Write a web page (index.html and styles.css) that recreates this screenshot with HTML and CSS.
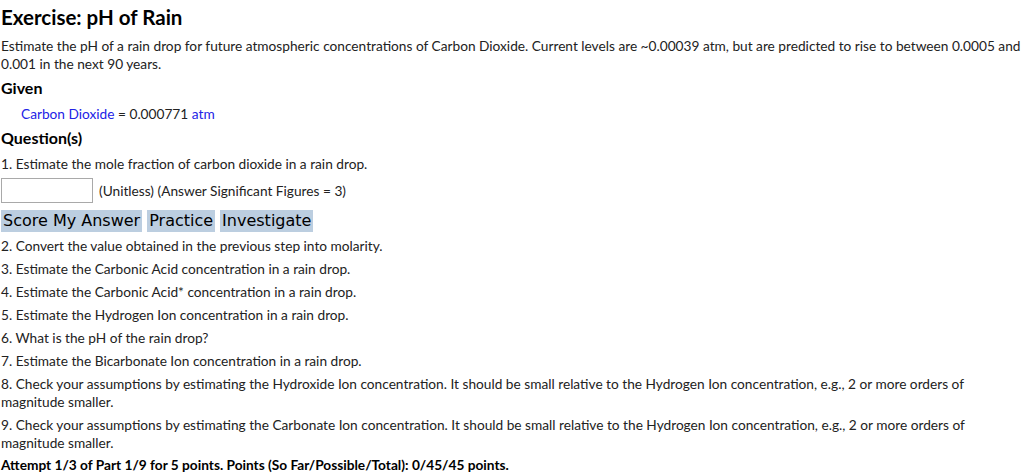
FILE: index.html
```html
<!DOCTYPE html>
<html>
<head>
<meta charset="utf-8">
<link rel="stylesheet" href="styles.css">
</head>
<body>
<div class="page">
  <h2 class="title">Exercise: pH of Rain</h2>
  <p class="intro">Estimate the pH of a rain drop for future atmospheric concentrations of Carbon Dioxide. Current levels are ~0.00039 atm, but are predicted to rise to between 0.0005 and 0.001 in the next 90 years.</p>
  <h3 class="section">Given</h3>
  <div class="given"><span class="var">Carbon Dioxide</span> = 0.000771 <span class="var">atm</span></div>
  <h3 class="section">Question(s)</h3>
  <p class="item first">1. Estimate the mole fraction of carbon dioxide in a rain drop.</p>
  <div class="answer-row">
    <input class="answer" type="text">
    <span class="units">(Unitless) (Answer Significant Figures = 3)</span>
  </div>
  <div class="buttons">
    <button class="btn">Score My Answer</button>
    <button class="btn">Practice</button>
    <button class="btn">Investigate</button>
  </div>
  <p class="item">2. Convert the value obtained in the previous step into molarity.</p>
  <p class="item">3. Estimate the Carbonic Acid concentration in a rain drop.</p>
  <p class="item">4. Estimate the Carbonic Acid* concentration in a rain drop.</p>
  <p class="item">5. Estimate the Hydrogen Ion concentration in a rain drop.</p>
  <p class="item">6. What is the pH of the rain drop?</p>
  <p class="item">7. Estimate the Bicarbonate Ion concentration in a rain drop.</p>
  <p class="item">8. Check your assumptions by estimating the Hydroxide Ion concentration. It should be small relative to the Hydrogen Ion concentration, e.g., 2 or more orders of magnitude smaller.</p>
  <p class="item">9. Check your assumptions by estimating the Carbonate Ion concentration. It should be small relative to the Hydrogen Ion concentration, e.g., 2 or more orders of magnitude smaller.</p>
  <p class="attempt">Attempt 1/3 of Part 1/9 for 5 points. Points (So Far/Possible/Total): 0/45/45 points.</p>
</div>
</body>
</html>
```
FILE: styles.css
```css
html, body {
  margin: 0;
  padding: 0;
  background: #ffffff;
}
.page {
  padding: 4px 0 0 1px;
  font-family: Lato, "Open Sans", sans-serif;
  font-size: 13.7px;
  line-height: 18px;
  color: #222222;
  width: 1022px;
}
.title {
  font-size: 20.5px;
  line-height: 26px;
  font-weight: bold;
  color: #000;
  margin: 0 0 7px 0;
}
.intro {
  margin: 0 0 4px 0;
}
.section {
  font-size: 16px;
  line-height: 22px;
  font-weight: bold;
  color: #000;
  margin: 0;
}
.given {
  padding-left: 20px;
  margin: 5px 0 3px 0;
  line-height: 20px;
}
.var {
  color: #2222e6;
}
.item {
  margin: 0 0 5px 0;
}
.item.first {
  margin-top: 6px;
  margin-bottom: 0;
}
.answer-row {
  display: flex;
  align-items: center;
  gap: 6px;
  margin: 5px 0 7px 0;
}
.answer {
  width: 86px;
  height: 23px;
  margin: 0;
  padding: 0 2px;
  border: 1px solid #a9a9a9;
  box-sizing: content-box;
}
.buttons {
  display: flex;
  gap: 5px;
  margin: 0 0 5px 0;
}
.btn {
  font-family: "DejaVu Sans", Verdana, sans-serif;
  font-size: 16px;
  line-height: 22px;
  height: 22px;
  padding: 0 2px;
  margin: 0;
  border: none;
  background: #bccee0;
  color: #000;
}
.attempt {
  margin: -1px 0 0 0;
  font-weight: bold;
  color: #000;
}
```
